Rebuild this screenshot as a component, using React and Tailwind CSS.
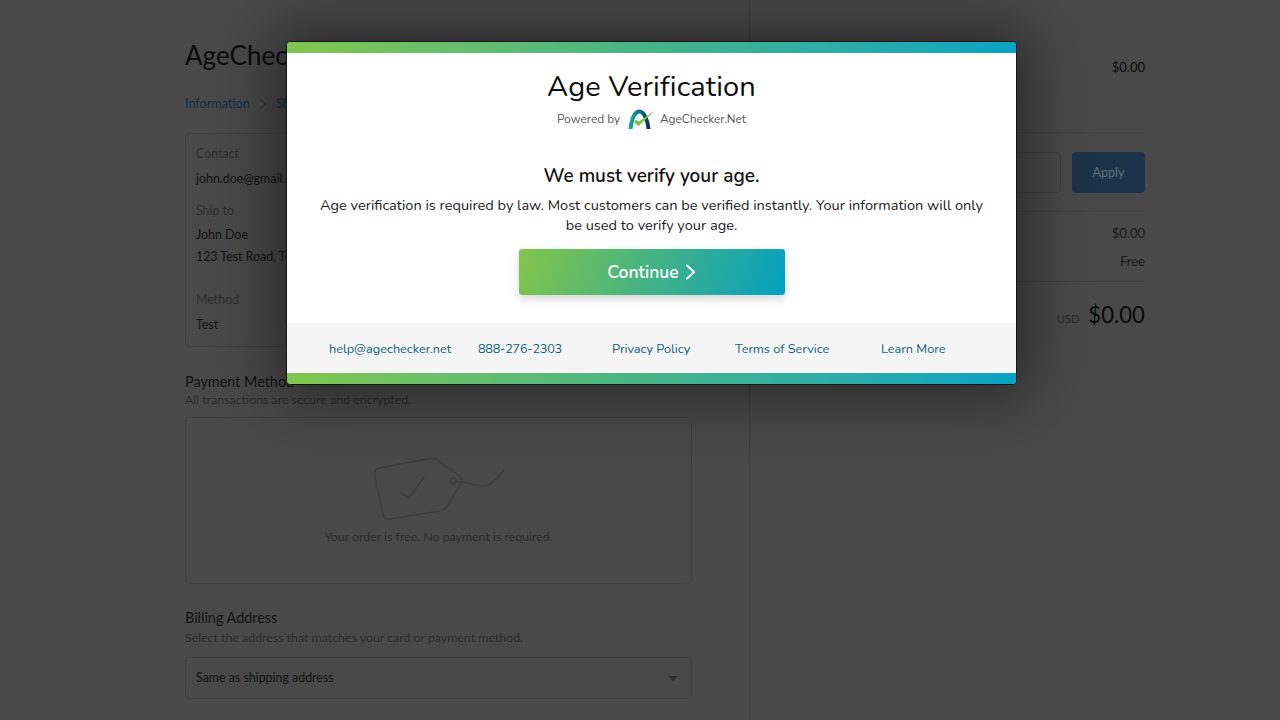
import React from "react";

const bar = "h-[11px] shrink-0 bg-gradient-to-r from-[#80c64c] via-[#45b487] to-[#06a3c4]";
const lato = { fontFamily: '"Lato", "Liberation Sans", sans-serif' };

function Logo() {
  return (
    <svg width="27" height="21" viewBox="0 0 27 21" className="ml-[8px] mr-[5px]">
      <defs>
        <linearGradient id="arch" x1="0" y1="0" x2="1" y2="0">
          <stop offset="0" stopColor="#0fa6a0" />
          <stop offset="0.55" stopColor="#0b6f86" />
          <stop offset="1" stopColor="#12304f" />
        </linearGradient>
      </defs>
      <path d="M2.5 20 C3 12 6 3 11 2.5 C16 2 20 12 20.5 20" fill="none" stroke="url(#arch)" strokeWidth="4" />
      <path d="M6 13.5 L10.5 17 L27 1.5 L11 12.5 L8 10.5 Z" fill="#7fc241" />
    </svg>
  );
}

function Tag() {
  return (
    <svg width="134" height="68" viewBox="0 0 134 68" fill="none" stroke="#3d3d3d" strokeWidth="1.4" strokeLinecap="round" strokeLinejoin="round">
      <path d="M7 12 L58 2.5 Q62 2 65 4 L88 20 Q91 23 89 27 L76 49 Q73 54 68 55 L17 63 Q12 64 11 59 L2.5 18 Q2 13 7 12 Z" />
      <circle cx="81" cy="25" r="3" />
      <path d="M84 26 C92 24 100 30 111 30 C120 30 126 21 132 14" />
      <path d="M28 37 L37 42 L52 21" />
    </svg>
  );
}

export default function App() {
  return (
    <div className="relative h-[720px] w-[1280px] overflow-hidden bg-[#494949] text-[#121212]" style={lato}>
      <div className="flex h-full">
        <main className="w-[750px] shrink-0 border-r border-[#414141] pl-[185px] pr-[57px] pt-[39px]">
          <h1 className="text-[26px] leading-[32px] text-[#0c0c0c]">AgeChecker Demo</h1>
          <nav className="mt-[25px] flex items-center text-[12.6px] leading-[16px] text-[#142c47]">
            <span>Information</span>
            <svg width="8" height="12" viewBox="0 0 8 12" className="mx-[9px]" fill="none" stroke="#2e2e2e"><path d="M1.5 1 L6.5 6 L1.5 11" /></svg>
            <span>Shipping</span>
          </nav>
          <section className="mt-[21px] h-[214px] rounded-[5px] border border-[#404040] px-[10px] pt-[10px] text-[12.4px] leading-[20px]">
            <p className="text-[#2e2e2e]">Contact</p>
            <p className="mt-[5px]">john.doe@gmail.com</p>
            <p className="mt-[12px] text-[#2e2e2e]">Ship to</p>
            <p className="mt-[4px]">John Doe</p>
            <p className="mt-[2px]">123 Test Road, Test</p>
            <p className="mt-[23px] text-[#2e2e2e]">Method</p>
            <p className="mt-[5px]">Test</p>
          </section>
          <h2 className="mt-[26px] text-[14.4px] leading-[18px]">Payment Method</h2>
          <p className="text-[12.35px] leading-[18px] text-[#2b2b2b]">All transactions are secure and encrypted.</p>
          <section className="mt-[8px] flex h-[167px] flex-col items-center rounded-[5px] border border-[#404040] pt-[38px]">
            <Tag />
            <p className="mt-[4px] text-[12.35px] leading-[18px] text-[#2b2b2b]">Your order is free. No payment is required.</p>
          </section>
          <h2 className="mt-[25px] text-[14.4px] leading-[18px]">Billing Address</h2>
          <p className="mt-[2px] text-[12.35px] leading-[18px] text-[#2b2b2b]">Select the address that matches your card or payment method.</p>
          <div className="mt-[10px] flex h-[42px] items-center justify-between rounded-[5px] border border-[#404040] pl-[10px] pr-[13px] pt-[1px] text-[12.4px]">
            <span>Same as shipping address</span>
            <span className="h-0 w-0 border-x-[5px] border-t-[5px] border-x-transparent border-t-[#2e2e2e]" />
          </div>
        </main>
        <aside className="w-[395px] shrink-0 pl-[58px] text-[13px]">
          <div className="flex h-[133px] justify-end border-b border-[#414141] pt-[58px]">
            <span className="leading-[18px] text-[#0a0a0a]">$0.00</span>
          </div>
          <div className="flex h-[79px] items-start gap-[11px] border-b border-[#414141] pt-[19px]">
            <div className="h-[41px] flex-1 rounded-[5px] border border-[#404040]" />
            <button className="h-[41px] w-[73px] rounded-[4px] bg-[#1d3349] pt-[1px] text-[12.6px] text-[#607080]">Apply</button>
          </div>
          <div className="h-[70px] border-b border-[#414141] pt-[12px] text-right leading-[18px] text-[#1a1a1a]">
            <p>$0.00</p>
            <p className="mt-[10px]">Free</p>
          </div>
          <div className="flex items-baseline justify-end gap-[9px] pt-[17px]">
            <span className="text-[11px] text-[#2a2a2a]">USD</span>
            <span className="text-[22.2px] leading-[32px] text-[#0a0a0a]">$0.00</span>
          </div>
        </aside>
      </div>

      <div
        className="absolute left-[287px] top-[42px] flex h-[342px] w-[729px] flex-col overflow-hidden rounded-[4px] bg-white shadow-[0_0_60px_14px_rgba(0,0,0,0.45),0_0_0_1px_#1d1d1d]"
        style={{ fontFamily: '"Nunito", "Lato", "Noto Sans", sans-serif' }}
      >
        <div className={bar} />
        <div className="flex flex-1 flex-col items-center pt-[15px]">
          <h2 className="text-[29px] leading-[38px] tracking-[0.15px] text-[#0d0d0d]">Age Verification</h2>
          <div className="mt-[3px] flex items-center text-[11.8px] leading-[21px] text-[#555555]">
            <span>Powered by</span>
            <Logo />
            <span>AgeChecker.Net</span>
          </div>
          <h3 className="mt-[33px] text-[19px] leading-[26px] font-semibold text-[#111111]">We must verify your age.</h3>
          <p className="mt-[6px] w-[680px] text-center text-[14.55px] leading-[20px] text-[#1a1a1a]">
            Age verification is required by law. Most customers can be verified instantly. Your information will only be used to verify your age.
          </p>
          <button className="mt-[14px] flex h-[46px] w-[266px] items-center justify-center gap-[6px] rounded-[3px] bg-[linear-gradient(110deg,#7fc44d_3%,#08a1bd_97%)] text-[17.5px] font-semibold text-white shadow-[0_4px_10px_rgba(0,0,0,0.16)]">
            Continue
            <svg width="11" height="16" viewBox="0 0 11 16" fill="none" stroke="white" strokeWidth="2" strokeLinecap="round" strokeLinejoin="round"><path d="M2 1.5 L9 8 L2 14.5" /></svg>
          </button>
        </div>
        <footer className="flex h-[50px] shrink-0 items-center bg-[#f5f5f5] pl-[42px] pt-[2px] text-[12.7px] text-[#0b6378]">
          <span className="w-[149px]">help@agechecker.net</span>
          <span className="w-[134px] tracking-[-0.25px]">888-276-2303</span>
          <span className="w-[123px]">Privacy Policy</span>
          <span className="w-[146px]">Terms of Service</span>
          <span>Learn More</span>
        </footer>
        <div className={bar} />
      </div>
    </div>
  );
}
